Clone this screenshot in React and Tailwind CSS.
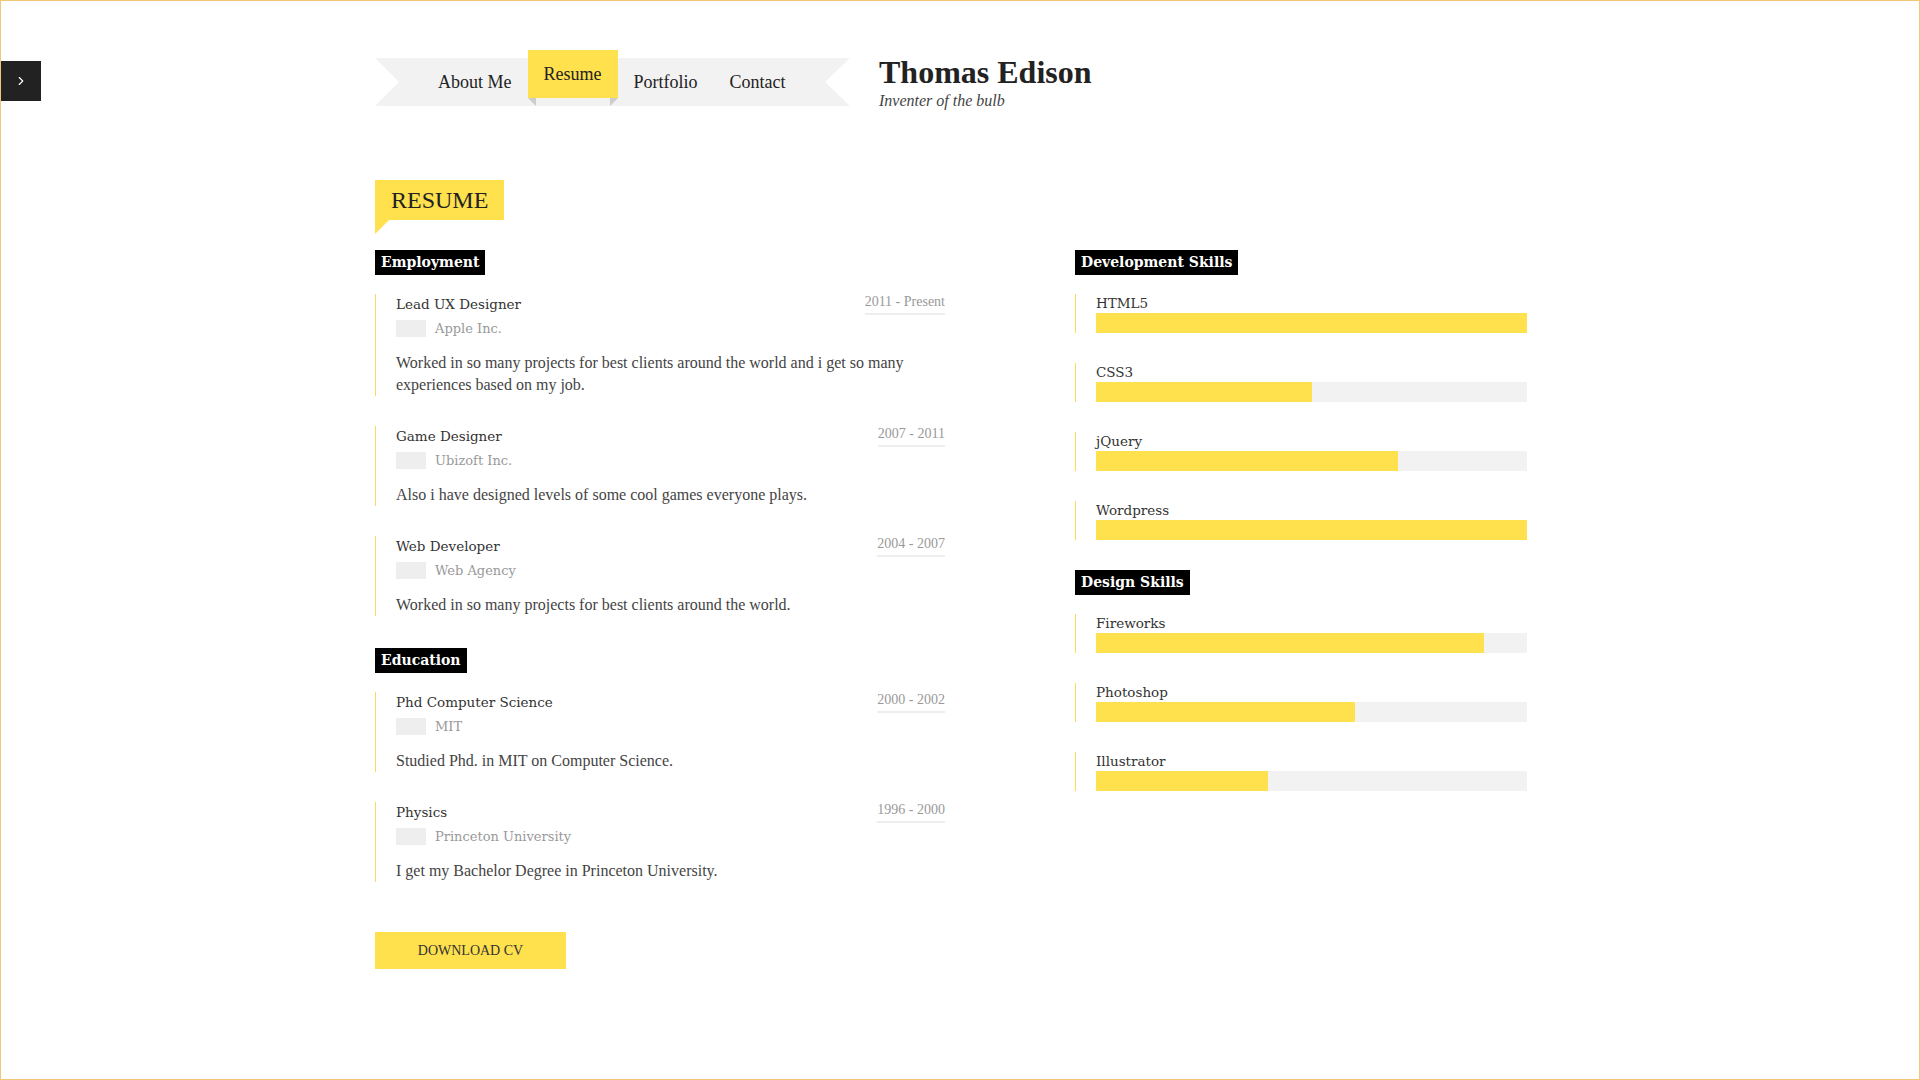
import { ChevronRight } from 'lucide-react'

const employment = [
  {
    title: 'Lead UX Designer',
    date: '2011 - Present',
    company: 'Apple Inc.',
    text: 'Worked in so many projects for best clients around the world and i get so many experiences based on my job.',
  },
  {
    title: 'Game Designer',
    date: '2007 - 2011',
    company: 'Ubizoft Inc.',
    text: 'Also i have designed levels of some cool games everyone plays.',
  },
  {
    title: 'Web Developer',
    date: '2004 - 2007',
    company: 'Web Agency',
    text: 'Worked in so many projects for best clients around the world.',
  },
]

const education = [
  {
    title: 'Phd Computer Science',
    date: '2000 - 2002',
    company: 'MIT',
    text: 'Studied Phd. in MIT on Computer Science.',
  },
  {
    title: 'Physics',
    date: '1996 - 2000',
    company: 'Princeton University',
    text: 'I get my Bachelor Degree in Princeton University.',
  },
]

const devSkills = [
  { name: 'HTML5', value: 100 },
  { name: 'CSS3', value: 50 },
  { name: 'jQuery', value: 70 },
  { name: 'Wordpress', value: 100 },
]

const designSkills = [
  { name: 'Fireworks', value: 90 },
  { name: 'Photoshop', value: 60 },
  { name: 'Illustrator', value: 40 },
]

function Label({ children }) {
  return (
    <div className="flex">
      <h3 className="h-[25px] bg-black px-[6px] font-['DejaVu_Serif',serif] text-[14px] font-bold leading-[25px] text-white">
        {children}
      </h3>
    </div>
  )
}

function Entry({ item, first }) {
  return (
    <div className={`border-l border-[#fbdc57] pl-5 ${first ? 'mt-[19px]' : 'mt-[30px]'}`}>
      <div className="flex items-start justify-between">
        <h4 className="font-['DejaVu_Serif',serif] text-[13.5px] leading-5 text-[#333]">{item.title}</h4>
        <span className="border-b-2 border-[#eeeeee] pb-[3px] font-['Liberation_Serif',serif] text-[14px] leading-4 text-[#999]">
          {item.date}
        </span>
      </div>
      <div className="mt-[5px] flex h-[17px] items-center gap-[9px]">
        <span className="h-[17px] w-[30px] bg-[#eeeeee]" />
        <span className="font-['DejaVu_Serif',serif] text-[13px] leading-[17px] text-[#999]">{item.company}</span>
      </div>
      <p className="mt-[15px] font-['Liberation_Serif',serif] text-[16px] leading-[22px] text-[#444]">{item.text}</p>
    </div>
  )
}

function Skill({ skill, first }) {
  return (
    <div className={`border-l border-[#fbdc57] pl-5 ${first ? 'mt-[19px]' : 'mt-[30px]'}`}>
      <div className="font-['DejaVu_Serif',serif] text-[13.5px] leading-[19px] text-[#333]">{skill.name}</div>
      <div className="h-5 w-full bg-[#f2f2f2]">
        <div className="h-5 bg-[#ffe04d]" style={{ width: `${skill.value}%` }} />
      </div>
    </div>
  )
}

export default function App() {
  return (
    <div className="relative h-[1080px] w-[1920px] overflow-hidden border border-[#f0c775] bg-white">
      <button className="absolute left-0 top-[60px] flex h-10 w-10 items-center justify-center bg-[#222]">
        <ChevronRight size={14} strokeWidth={2} className="text-white" />
      </button>

      <div className="pl-[374px] pt-[49px]">
        <header className="flex h-14 items-start">
          <nav className="relative h-14 w-[475px]">
            <svg className="absolute left-0 top-2" width="475" height="48" viewBox="0 0 475 48">
              <polygon points="0,0 475,0 450,24 475,48 0,48 24,24" fill="#f2f2f2" />
            </svg>
            <ul className="relative flex items-start pl-[47px] font-['Liberation_Serif',serif] text-[18px] text-[#222]">
              <li className="mt-2 flex h-12 items-center px-4">About Me</li>
              <li className="relative flex h-12 items-center bg-[#ffe04d] px-4">
                Resume
                <svg className="absolute left-0 top-12" width="8" height="8" viewBox="0 0 8 8">
                  <polygon points="0,0 8,0 8,8" fill="#cccccc" />
                </svg>
                <svg className="absolute right-0 top-12" width="8" height="8" viewBox="0 0 8 8">
                  <polygon points="0,0 8,0 0,8" fill="#cccccc" />
                </svg>
              </li>
              <li className="mt-2 flex h-12 items-center px-4">Portfolio</li>
              <li className="mt-2 flex h-12 items-center px-4">Contact</li>
            </ul>
          </nav>
          <div className="ml-[29px] pt-[4px]">
            <h1 className="font-['Liberation_Serif',serif] text-[32px] font-bold leading-9 text-[#222]">Thomas Edison</h1>
            <p className="mt-[1px] font-['Liberation_Serif',serif] text-[16px] italic leading-5 text-[#444]">
              Inventer of the bulb
            </p>
          </div>
        </header>

        <div className="mt-[74px] flex flex-col items-start">
          <h2 className="h-10 bg-[#ffe04d] px-4 font-['Liberation_Serif',serif] text-[24px] leading-10 text-[#222]">RESUME</h2>
          <svg width="14" height="14" viewBox="0 0 14 14">
            <polygon points="0,0 14,0 0,14" fill="#ffe04d" />
          </svg>
        </div>

        <div className="mt-4 flex items-start gap-[130px]">
          <section className="w-[570px]">
            <Label>Employment</Label>
            {employment.map((item, i) => (
              <Entry key={item.title} item={item} first={i === 0} />
            ))}
            <div className="mt-[32px]">
              <Label>Education</Label>
            </div>
            {education.map((item, i) => (
              <Entry key={item.title} item={item} first={i === 0} />
            ))}
            <button className="mt-[50px] h-[37px] w-[191px] bg-[#ffe04d] font-['Liberation_Serif',serif] text-[14px] uppercase text-[#333]">
              Download CV
            </button>
          </section>

          <section className="w-[452px]">
            <Label>Development Skills</Label>
            {devSkills.map((s, i) => (
              <Skill key={s.name} skill={s} first={i === 0} />
            ))}
            <div className="mt-[30px]">
              <Label>Design Skills</Label>
            </div>
            {designSkills.map((s, i) => (
              <Skill key={s.name} skill={s} first={i === 0} />
            ))}
          </section>
        </div>
      </div>
    </div>
  )
}
